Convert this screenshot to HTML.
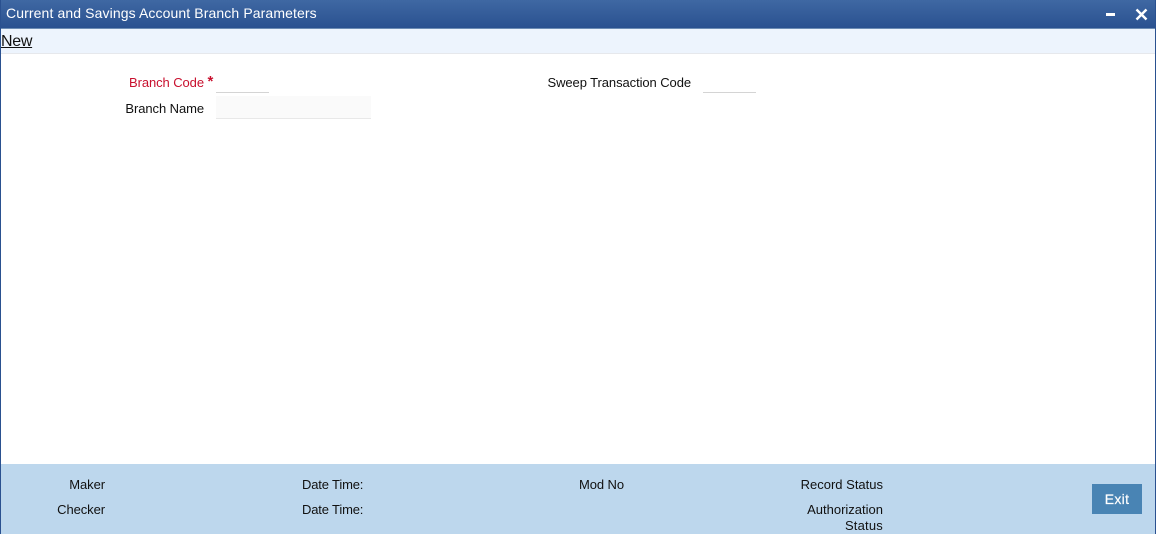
<!DOCTYPE html>
<html><head><meta charset="utf-8"><style>
html,body{margin:0;padding:0;background:#fff;}
body{width:1156px;height:541px;position:relative;overflow:hidden;font-family:"Liberation Sans",Arial,sans-serif;font-size:13px;letter-spacing:-0.08px;color:#111;}
div{position:absolute;white-space:nowrap;}
.r{text-align:right;}
</style></head><body>
<div style="left:0;top:0;width:1156px;height:534px;background:#fff;"></div>
<div style="left:0;top:464px;width:1156px;height:70px;background:#bdd7ed;"></div>
<div style="left:0;top:0;width:1156px;height:28px;background:linear-gradient(#3f68a3,#2a5190);"></div>
<div style="left:0;top:28px;width:1156px;height:1px;background:#6c8cb4;"></div>
<div style="left:0;top:29px;width:1156px;height:24px;background:#edf4fd;"></div>
<div style="left:0;top:53px;width:1156px;height:1px;background:#e6e8ec;"></div>
<div style="left:0;top:0;width:1px;height:534px;background:#2a5190;"></div>
<div style="left:1155px;top:0;width:1px;height:534px;background:#2a5190;"></div>
<div style="left:6px;top:5px;line-height:17px;color:#fff;font-size:14px;letter-spacing:0.11px;">Current and Savings Account Branch Parameters</div>
<svg style="position:absolute;left:1100px;top:5px" width="50" height="20"><rect x="6" y="8" width="9" height="3" fill="#fff"/><path d="M36.5 4.5L46.5 14.5M46.5 4.5L36.5 14.5" stroke="#fff" stroke-width="2.4" fill="none"/></svg>
<div style="left:1px;top:33px;line-height:18px;font-size:16px;letter-spacing:-0.3px;color:#111;text-decoration:underline;">New</div>
<div class="r" style="right:952px;top:75px;line-height:16px;color:#c8102e;">Branch Code</div>
<div style="left:207.5px;top:74px;line-height:16px;color:#c8102e;font-size:15px;font-weight:bold;">*</div>
<div style="left:216px;top:72px;width:53px;height:20px;border-bottom:1px solid #d4d4d4;"></div>
<div class="r" style="right:952px;top:101px;line-height:16px;">Branch Name</div>
<div style="left:216px;top:96px;width:155px;height:22px;background:#fafafa;border-bottom:1px solid #e8e8e8;"></div>
<div class="r" style="right:465px;top:75px;line-height:16px;">Sweep Transaction Code</div>
<div style="left:703px;top:72px;width:53px;height:20px;border-bottom:1px solid #d4d4d4;"></div>
<div class="r" style="right:1051px;top:477px;line-height:16px;">Maker</div>
<div class="r" style="right:1051px;top:502px;line-height:16px;">Checker</div>
<div style="left:302px;top:477px;line-height:16px;letter-spacing:-0.16px;">Date Time:</div>
<div style="left:302px;top:502px;line-height:16px;letter-spacing:-0.16px;">Date Time:</div>
<div class="r" style="right:532px;top:477px;line-height:16px;">Mod No</div>
<div class="r" style="right:273px;top:477px;line-height:16px;letter-spacing:0;">Record Status</div>
<div class="r" style="right:273px;top:502px;line-height:16px;letter-spacing:0;">Authorization</div>
<div class="r" style="right:273px;top:518px;line-height:16px;letter-spacing:0.2px;">Status</div>
<div style="left:1092px;top:484px;width:50px;height:30px;background:#4984b4;color:#fff;font-size:14px;letter-spacing:0.3px;-webkit-text-stroke:0.2px #fff;line-height:30px;text-align:center;">Exit</div>
</body></html>
